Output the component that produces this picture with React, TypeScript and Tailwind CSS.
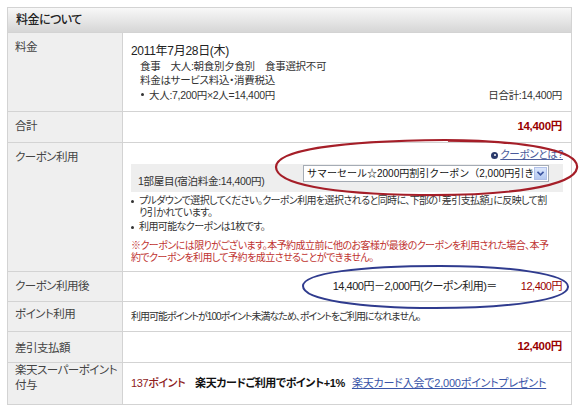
import React from 'react';

const Row: React.FC<{ label: React.ReactNode; h: string; labelPad?: string; className?: string; children?: React.ReactNode }> = ({
  label,
  h,
  labelPad = 'pt-[6px] leading-[16px]',
  className = '',
  children,
}) => (
  <div className={`grid grid-cols-[115px_minmax(0,1fr)] border-t border-[#d3d3d3] ${h}`}>
    <div className={`bg-[#efefef] border-r border-[#d3d3d3] pl-[7px] text-[11.5px] tracking-[-0.5px] text-[#444] whitespace-nowrap ${labelPad}`}>
      {label}
    </div>
    <div className={`min-w-0 overflow-hidden ${className}`}>{children}</div>
  </div>
);

const Bullet: React.FC<{ children: React.ReactNode }> = ({ children }) => (
  <div className="flex">
    <span className="w-[8px] shrink-0 flex justify-start pt-[5px]">
      <span className="block w-[3px] h-[3px] rounded-full bg-[#333]" />
    </span>
    <div>{children}</div>
  </div>
);

export default function App() {
  return (
    <div className="relative w-[580px] h-[407px] bg-white overflow-hidden font-['Liberation_Sans','Noto_Sans_CJK_JP',sans-serif] [font-feature-settings:'palt'] text-[#333]">
      <div className="ml-[7px] mt-[7px] w-[565px] border-x border-b border-[#d3d3d3]">
        <div className="h-[25px] border-t border-[#d3d3d3] bg-linear-to-b from-[#f8f8f8] to-[#d6d6d6] flex items-center pl-[8px] text-[12px] tracking-[-0.5px] font-medium text-[#222]">
          料金について
        </div>

        <Row label="料金" h="h-[79px]" className="pl-2 pr-[9px] pt-[10px]">
          <div className="text-[12px] tracking-[-0.3px] leading-[16px] text-[#222]">2011年7月28日(木)</div>
          <div className="pl-[9px] text-[10.5px] tracking-[-0.3px] leading-[14px]">
            <div>食事　大人:朝食別夕食別　食事選択不可</div>
            <div>料金はサービス料込・消費税込</div>
          </div>
          <div className="flex justify-between items-center pl-[10px] mt-[1px] text-[10.5px] tracking-[-0.3px] leading-[14px]">
            <Bullet>大人:7,200円×2人=14,400円</Bullet>
            <span>日合計:14,400円</span>
          </div>
        </Row>

        <Row label="合計" h="h-[31px]" className="flex items-center justify-end pr-[9px]">
          <span className="text-[11.5px] tracking-[-0.3px] font-bold text-[#990000]">14,400円</span>
        </Row>

        <Row label="クーポン利用" h="h-[129px]" className="pl-2 pr-2 pt-[5px]">
          <div className="flex justify-end items-center h-[14px] text-[10.5px] tracking-[-0.3px]">
            <span className="w-[7px] h-[7px] rounded-full bg-[#2b3a6b] mr-[2px] flex items-center justify-center">
              <span className="block w-[2px] h-[2px] rounded-full bg-white" />
            </span>
            <span className="underline text-[#4b5b9b]">クーポンとは?</span>
          </div>
          <div className="mt-[2px] h-[28px] bg-[#eeeeee] flex justify-between pl-[7px] pr-[14px]">
            <span className="self-end pb-[4px] text-[10.5px] tracking-[-0.3px] leading-[14px]">1部屋目(宿泊料金:14,400円)</span>
            <div className="mt-[1px] w-[246px] h-[17px] border border-[#a5acb5] bg-white flex items-center overflow-hidden">
              <span className="flex-1 min-w-0 pl-[3px] text-[10px] leading-[15px] text-[#111] whitespace-nowrap overflow-hidden [font-feature-settings:normal]">
                サマーセール☆2000円割引クーポン（2,000円引き
              </span>
              <span className="shrink-0 w-[13px] h-[13px] mr-px bg-linear-to-b from-[#dbe6fb] to-[#b4c8f0] border border-[#b0c0e8] flex items-center justify-center">
                <svg width="7" height="5" viewBox="0 0 7 5">
                  <path d="M0.5 0.8 L3.5 3.8 L6.5 0.8" fill="none" stroke="#3b54a0" strokeWidth="1.6" />
                </svg>
              </span>
            </div>
          </div>
          <div className="mt-[3px] text-[10px] tracking-[-0.6px] leading-[12px] whitespace-nowrap">
            <Bullet>
              <div>プルダウンで選択してください。クーポン利用を選択されると同時に、下部の「差引支払額」に反映して割</div>
              <div>り引かれています。</div>
            </Bullet>
            <div className="mt-[2px]">
              <Bullet>利用可能なクーポンは1枚です。</Bullet>
            </div>
          </div>
          <div className="mt-[7px] text-[10px] tracking-[-0.55px] leading-[12px] text-[#c03330] whitespace-nowrap">
            <div>※クーポンには限りがございます。本予約成立前に他のお客様が最後のクーポンを利用された場合、本予</div>
            <div>約でクーポンを利用して予約を成立させることができません。</div>
          </div>
        </Row>

        <Row label="クーポン利用後" h="h-[30px]" className="flex items-center justify-end pr-[9px] text-[11px] tracking-[-0.5px] whitespace-nowrap">
          <span className="text-[#222]">14,400円－2,000円(クーポン利用)＝</span>
          <span className="ml-[24px] text-[#990000]">12,400円</span>
        </Row>

        <Row label="ポイント利用" h="h-[30px]" labelPad="pt-[4px] leading-[16px]" className="flex items-center pl-2 text-[10px] tracking-[-1px] whitespace-nowrap">
          利用可能ポイントが100ポイント未満なため、ポイントをご利用になれません。
        </Row>

        <Row label="差引支払額" h="h-[31px]" labelPad="pt-[8px] leading-[16px]" className="flex items-center justify-end pr-[9px]">
          <span className="text-[11.5px] tracking-[-0.3px] font-bold text-[#990000]">12,400円</span>
        </Row>

        <Row
          label={
            <>
              楽天スーパーポイント
              <br />
              付与
            </>
          }
          h="h-[42px]"
          labelPad="pt-0 leading-[15px]"
          className="flex items-center pl-2 text-[11px] tracking-[-0.4px] whitespace-nowrap"
        >
          <span className="font-medium text-[#8e1c1c]">137ポイント</span>
          <span className="ml-[10px] font-bold text-[#111]">楽天カードご利用でポイント+1%</span>
          <span className="ml-[7px] underline text-[#3a55a8] tracking-[-0.2px]">楽天カード入会で2,000ポイントプレゼント</span>
        </Row>
      </div>

      {/* hand-drawn marks over the table */}
      <svg className="absolute inset-0 pointer-events-none" width="580" height="407" viewBox="0 0 580 407">
        <path
          d="M448 141 C 520 140, 580 150, 577 168 C 574 186, 510 196, 420 195 C 330 194, 276 184, 276 167 C 276 150, 340 141, 445 140 C 470 140, 490 141, 505 143"
          fill="none"
          stroke="#a51e28"
          strokeWidth="2.2"
        />
        <path
          d="M440 266 C 510 266, 569 274, 568 287 C 567 300, 510 308, 435 308 C 360 308, 303 300, 303 286 C 303 273, 360 266, 440 266 Z"
          fill="none"
          stroke="#2f3b8e"
          strokeWidth="2"
        />
      </svg>
    </div>
  );
}
